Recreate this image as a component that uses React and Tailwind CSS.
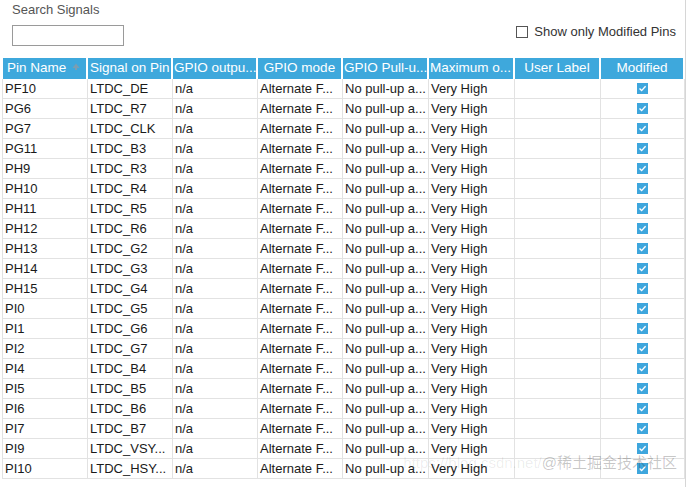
import { useState } from 'react'

const rows = [
  ['PF10', 'LTDC_DE'],
  ['PG6', 'LTDC_R7'],
  ['PG7', 'LTDC_CLK'],
  ['PG11', 'LTDC_B3'],
  ['PH9', 'LTDC_R3'],
  ['PH10', 'LTDC_R4'],
  ['PH11', 'LTDC_R5'],
  ['PH12', 'LTDC_R6'],
  ['PH13', 'LTDC_G2'],
  ['PH14', 'LTDC_G3'],
  ['PH15', 'LTDC_G4'],
  ['PI0', 'LTDC_G5'],
  ['PI1', 'LTDC_G6'],
  ['PI2', 'LTDC_G7'],
  ['PI4', 'LTDC_B4'],
  ['PI5', 'LTDC_B5'],
  ['PI6', 'LTDC_B6'],
  ['PI7', 'LTDC_B7'],
  ['PI9', 'LTDC_VSY...'],
  ['PI10', 'LTDC_HSY...'],
]

const headers = [
  { label: 'Pin Name', align: 'justify-start pl-[4px]', sort: true },
  { label: 'Signal on Pin', align: 'justify-start pl-[2px]' },
  { label: 'GPIO outpu...', align: 'justify-start pl-[1px]' },
  { label: 'GPIO mode', align: 'justify-center' },
  { label: 'GPIO Pull-u...', align: 'justify-start pl-[1px]' },
  { label: 'Maximum o...', align: 'justify-start pl-[1px]' },
  { label: 'User Label', align: 'justify-center' },
  { label: 'Modified', align: 'justify-center' },
]

const cols = 'grid grid-cols-[85px_85px_85px_85px_86px_86px_86px_84px]'

const CheckMark = () => (
  <span className="flex w-[11px] h-[11px] bg-[#3ea6dd] items-center justify-center">
    <svg width="9" height="9" viewBox="0 0 9 9">
      <path d="M1.5 4.6 L3.6 6.6 L7.6 2.2" stroke="white" strokeWidth="1.4" fill="none" />
    </svg>
  </span>
)

const Cell = ({ children, className = '' }) => (
  <div className={'flex items-center h-[19px] border-r border-[#e2e2e2] whitespace-nowrap overflow-hidden ' + className}>
    {children}
  </div>
)

export default function App() {
  const [onlyModified, setOnlyModified] = useState(false)

  return (
    <div
      className="w-[688px] h-[487px] bg-white overflow-hidden relative text-[13px] text-[#1a1a1a]"
      style={{ fontFamily: '"Liberation Sans", Arial, sans-serif' }}
    >
      <div className="border-r border-[#d6d6d6] w-[686px] h-full">
        {/* search + filter */}
        <div className="flex justify-between h-[58px]">
          <div className="pl-3 pt-[1px]">
            <div className="text-[#555] leading-[18px]">Search Signals</div>
            <input className="mt-[6px] w-[112px] h-[21px] border border-[#9a9a9a] outline-none px-1" />
          </div>
          <label className="flex items-center gap-[6px] mt-[25px] h-[14px] mr-[9px] text-[#333]">
            <span
              className={'w-[12px] h-[12px] border border-[#555] ' + (onlyModified ? 'bg-[#3ea6dd]' : 'bg-white')}
              onClick={() => setOnlyModified(!onlyModified)}
            />
            <span>Show only Modified Pins</span>
          </label>
        </div>

        <div className="ml-[1px] w-[684px]">
          <div className={cols + ' h-[21px]'}>
            {headers.map((h, i) => (
              <div
                key={i}
                className={
                  'flex items-center border-l-2 border-white bg-[#3ea8dc] text-white text-[13.5px] whitespace-nowrap overflow-hidden ' +
                  h.align
                }
              >
                <span>{h.label}</span>
                {h.sort && (
                  <svg width="8" height="8" viewBox="0 0 8 8" className="ml-[6px] mb-[4px] shrink-0">
                    <path d="M4 0.5 L7.5 5 L0.5 5 Z" fill="#7d9db0" />
                    <rect x="3" y="5" width="2" height="2" fill="#7d9db0" />
                  </svg>
                )}
              </div>
            ))}
          </div>

          {rows.map((r, i) => (
            <div key={i} className={cols + ' border-b border-l border-[#e2e2e2] ml-[1px]'}>
              <Cell className="pl-[2px]">{r[0]}</Cell>
              <Cell className="pl-[2px]">{r[1]}</Cell>
              <Cell className="pl-[2px]">n/a</Cell>
              <Cell className="pl-[2px]">Alternate F...</Cell>
              <Cell className="pl-[2px]">No pull-up a...</Cell>
              <Cell className="pl-[2px]">Very High</Cell>
              <Cell />
              <Cell className="justify-center">
                <CheckMark />
              </Cell>
            </div>
          ))}
        </div>
      </div>

      {/* watermark */}
      <div
        className="absolute left-0 w-[677px] top-[452px] flex justify-end items-center whitespace-nowrap pointer-events-none"
        style={{ fontFamily: '"Liberation Sans", "Noto Sans CJK SC", sans-serif' }}
      >
        <span className="text-[15px] text-[#000000]/[0.08]">https://blog.csdn.net/</span>
        <span className="text-[15px] text-[#000000]/[0.22]">@稀土掘金技术社区</span>
      </div>
    </div>
  )
}
